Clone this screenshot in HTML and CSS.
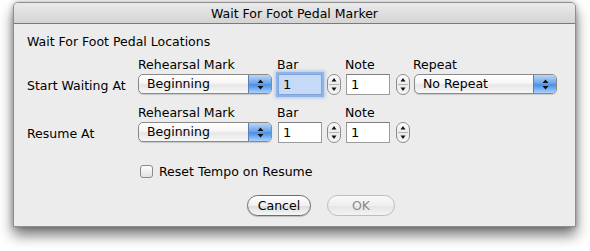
FILE: index.html
```html
<!DOCTYPE html>
<html lang="en">
<head>
    <meta charset="UTF-8">
    <title>Wait For Foot Pedal Marker</title>
    <link rel="stylesheet" href="styles.css">
</head>
<body>
    <div class="window">
        <div class="titlebar">Wait For Foot Pedal Marker</div>
        <div class="content">
            <div class="heading">Wait For Foot Pedal Locations</div>

            <div class="form-row">
                <div class="caption c-popup">Rehearsal Mark</div>
                <div class="caption c-bar">Bar</div>
                <div class="caption c-note">Note</div>
                <div class="caption c-repeat">Repeat</div>

                <div class="row-label">Start Waiting At</div>
                <div class="popup">
                    <span class="popup-text">Beginning</span>
                    <span class="popup-arrows"><svg width="7" height="11" viewBox="0 0 7 11"><path d="M3.5 0.5 L6.5 4 L0.5 4 Z M0.5 7 L6.5 7 L3.5 10.5 Z" fill="#111"/></svg></span>
                </div>
                <div class="field focused"><span class="sel">1</span></div>
                <div class="stepper"><svg width="14" height="21" viewBox="0 0 14 21"><path d="M7 4 L9.5 7.5 L4.5 7.5 Z M4.5 13.5 L9.5 13.5 L7 17 Z" fill="#111"/><line x1="2" y1="10.5" x2="12" y2="10.5" stroke="#b5b5b5"/></svg></div>
                <div class="field">1</div>
                <div class="stepper"><svg width="14" height="21" viewBox="0 0 14 21"><path d="M7 4 L9.5 7.5 L4.5 7.5 Z M4.5 13.5 L9.5 13.5 L7 17 Z" fill="#111"/><line x1="2" y1="10.5" x2="12" y2="10.5" stroke="#b5b5b5"/></svg></div>
                <div class="popup wide">
                    <span class="popup-text">No Repeat</span>
                    <span class="popup-arrows"><svg width="7" height="11" viewBox="0 0 7 11"><path d="M3.5 0.5 L6.5 4 L0.5 4 Z M0.5 7 L6.5 7 L3.5 10.5 Z" fill="#111"/></svg></span>
                </div>
            </div>

            <div class="form-row second">
                <div class="caption c-popup">Rehearsal Mark</div>
                <div class="caption c-bar">Bar</div>
                <div class="caption c-note">Note</div>

                <div class="row-label">Resume At</div>
                <div class="popup">
                    <span class="popup-text">Beginning</span>
                    <span class="popup-arrows"><svg width="7" height="11" viewBox="0 0 7 11"><path d="M3.5 0.5 L6.5 4 L0.5 4 Z M0.5 7 L6.5 7 L3.5 10.5 Z" fill="#111"/></svg></span>
                </div>
                <div class="field">1</div>
                <div class="stepper"><svg width="14" height="21" viewBox="0 0 14 21"><path d="M7 4 L9.5 7.5 L4.5 7.5 Z M4.5 13.5 L9.5 13.5 L7 17 Z" fill="#111"/><line x1="2" y1="10.5" x2="12" y2="10.5" stroke="#b5b5b5"/></svg></div>
                <div class="field">1</div>
                <div class="stepper"><svg width="14" height="21" viewBox="0 0 14 21"><path d="M7 4 L9.5 7.5 L4.5 7.5 Z M4.5 13.5 L9.5 13.5 L7 17 Z" fill="#111"/><line x1="2" y1="10.5" x2="12" y2="10.5" stroke="#b5b5b5"/></svg></div>
            </div>

            <label class="check-row">
                <span class="checkbox"></span>
                <span>Reset Tempo on Resume</span>
            </label>

            <div class="buttons">
                <div class="button">Cancel</div>
                <div class="button ok">OK</div>
            </div>
        </div>
    </div>
</body>
</html>
```

FILE: styles.css
```css
body {
    margin: 0;
    padding: 2px 0 24px 13px;
    background-color: #fff;
    font-family: "DejaVu Sans", sans-serif;
    font-size: 12.5px;
    color: #000;
}

.window {
    width: 563px;
    height: 225px;
    box-sizing: border-box;
    background-color: #ececec;
    border: 1px solid #8e8e8e;
    border-radius: 5px 5px 0 0;
    box-shadow: 0 8px 14px rgba(0, 0, 0, 0.55), 0 0 5px rgba(0, 0, 0, 0.25);
}

.titlebar {
    height: 20px;
    line-height: 21px;
    text-align: center;
    border-bottom: 1px solid #7a7a7a;
    border-radius: 4px 4px 0 0;
    background: linear-gradient(#eaeaea, #d4d4d4);
}

.content {
    padding: 10px 0 0 13px;
}

.heading {
    height: 16px;
    line-height: 16px;
}

.form-row {
    display: grid;
    grid-template-columns: 111px 139px 50px 18px 51px 18px 143px;
    grid-template-rows: 14px 20px;
    row-gap: 2px;
    margin-top: 8px;
}

.form-row.second {
    margin-top: 12px;
}

.caption {
    grid-row: 1;
    line-height: 14px;
    white-space: nowrap;
}

.c-popup { grid-column: 2; }
.c-bar { grid-column: 3 / 5; }
.c-note { grid-column: 5 / 7; }
.c-repeat { grid-column: 7; margin-left: -1px; }

.row-label {
    grid-row: 2;
    grid-column: 1;
    line-height: 20px;
    padding-top: 2px;
    white-space: nowrap;
}

.popup {
    grid-row: 2;
    width: 134px;
    height: 20px;
    box-sizing: border-box;
    display: flex;
    border: 1px solid #8a8a8a;
    border-radius: 5px;
    background: linear-gradient(#ffffff, #f6f6f6 45%, #e6e6e6 55%, #f8f8f8);
    box-shadow: 0 1px 1px rgba(0, 0, 0, 0.15);
    overflow: hidden;
}

.popup.wide {
    width: 143px;
}

.popup-text {
    flex: 1;
    padding-left: 8px;
    line-height: 18px;
}

.popup-arrows {
    width: 22px;
    display: flex;
    align-items: center;
    justify-content: center;
    border-left: 1px solid #5a7fb8;
    background: linear-gradient(#b9d6f8, #6fa6ea 45%, #4a8ee4 55%, #a9d3ff);
}

.field {
    grid-row: 2;
    height: 21px;
    box-sizing: border-box;
    margin-left: 1px;
    width: 44px;
    padding: 1px 4px;
    line-height: 18px;
    font-size: 13px;
    background-color: #fff;
    border: 1px solid #9c9c9c;
    border-top-color: #7e7e7e;
}

.field.focused {
    background-color: #c6d9f7;
    border-color: #7ea3d9;
    box-shadow: 0 0 0 2px #8fb4ec, 0 0 3px 3px rgba(120, 160, 230, 0.5);
}

.stepper {
    grid-row: 2;
    width: 14px;
    height: 21px;
    box-sizing: border-box;
    border: 1px solid #8c8c8c;
    border-radius: 7px;
    background: linear-gradient(#ffffff, #eaeaea 50%, #f6f6f6);
    display: flex;
    align-items: center;
    justify-content: center;
}

.stepper svg {
    display: block;
    flex: none;
}

.check-row {
    display: flex;
    align-items: center;
    gap: 6px;
    margin: 22px 0 0 113px;
    height: 14px;
}

.checkbox {
    width: 13px;
    height: 13px;
    box-sizing: border-box;
    border: 1px solid #8a8a8a;
    border-radius: 3px;
    background: linear-gradient(#fdfdfd, #e2e2e2);
}

.buttons {
    display: flex;
    gap: 16px;
    margin: 17px 0 0 220px;
}

.button {
    height: 21px;
    box-sizing: border-box;
    width: 64px;
    border: 1px solid #6d6d6d;
    border-radius: 11px;
    text-align: center;
    line-height: 19px;
    background: linear-gradient(#ffffff, #f0f0f0 50%, #dedede 55%, #f6f6f6);
    box-shadow: 0 1px 1px rgba(0, 0, 0, 0.2);
}

.button.ok {
    width: 68px;
    color: #8a8a8a;
    border-color: #bdbdbd;
    box-shadow: none;
    background: linear-gradient(#fafafa, #eeeeee 50%, #e6e6e6 55%, #f2f2f2);
}
```
